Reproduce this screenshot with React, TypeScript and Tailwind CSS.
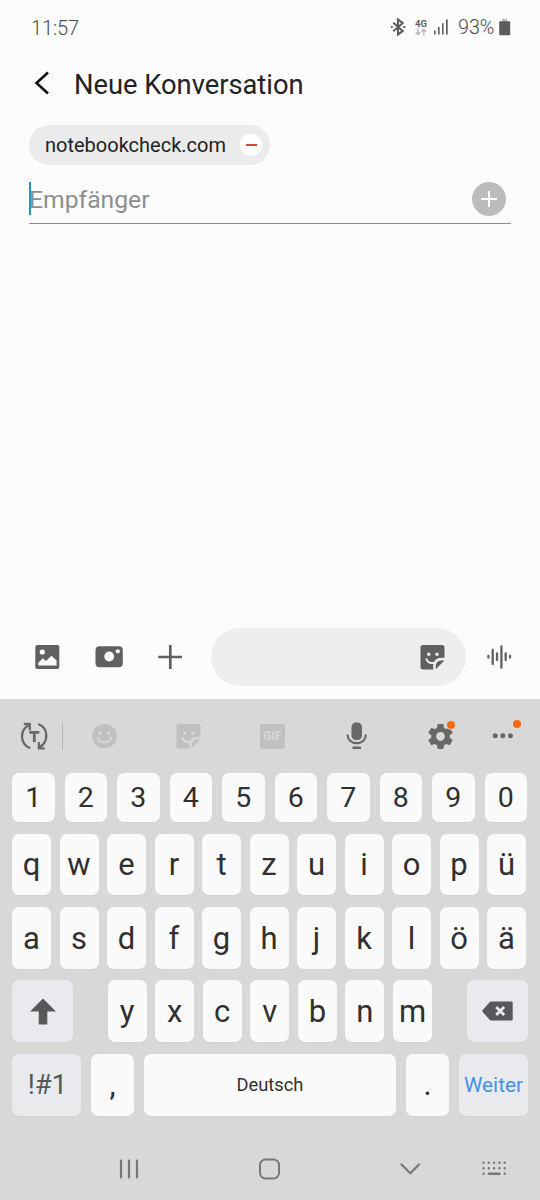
import type { ReactNode } from 'react'
import { clsx } from 'clsx'

const numberRow = ['1', '2', '3', '4', '5', '6', '7', '8', '9', '0']
const topRow = ['q', 'w', 'e', 'r', 't', 'z', 'u', 'i', 'o', 'p', 'ü']
const homeRow = ['a', 's', 'd', 'f', 'g', 'h', 'j', 'k', 'l', 'ö', 'ä']
const bottomRow = ['y', 'x', 'c', 'v', 'b', 'n', 'm']

interface KeyProps {
  children: ReactNode
  label?: string
  special?: boolean
  className?: string
}

function Key({ children, label, special, className }: KeyProps) {
  return (
    <button
      aria-label={label}
      className={clsx(
        'flex h-full items-center justify-center rounded-[7px] shadow-[0_1px_1px_rgba(0,0,0,0.03)]',
        special ? 'bg-[#e9eaee] text-[#58585a]' : 'bg-[#fafafa] text-[#303030]',
        className
      )}
    >
      {children}
    </button>
  )
}

function StickerIcon({ cutout }: { cutout: string }) {
  return (
    <svg width="25" height="25" viewBox="0 0 25 25" fill="currentColor">
      <path d="M3 0h19a2.500 2.500 0 0 1 2.500 2.500V12.700h-3.200c-4.600 0-8 3.500-8 8v3.800H3A2.500 2.500 0 0 1 0.500 22V2.500A2.500 2.500 0 0 1 3 0z" />
      <path d="M15.700 24.300v-3.200c0-3.400 2.400-5.700 5.700-5.700h3z" />
      <circle cx="8.800" cy="9.300" r="1.700" fill={cutout} />
      <circle cx="17" cy="9.300" r="1.700" fill={cutout} />
      <path d="M6.500 14.200c1.100 3.300 4.500 4.700 8 3.400" fill="none" stroke={cutout} strokeWidth="2" strokeLinecap="round" />
      <path d="M14.500 24.500v-3.600c0-4 2.900-6.900 6.800-6.900h3.700" fill="none" stroke={cutout} strokeWidth="1.700" />
    </svg>
  )
}

function StatusBar() {
  return (
    <div className="flex h-[55px] items-center justify-between pr-[29px] pl-[31px] text-[#5c5c5c]">
      <span className="text-[20px] leading-none font-light tracking-[-0.1px] text-[#4c4c4c]">11:57</span>
      <div className="flex items-center">
        <svg width="16" height="18" viewBox="0 0 16 18" fill="none" stroke="currentColor" strokeWidth="2">
          <path d="M2.300 4.700l9.500 8.200-4.800 3.700V1.400l4.800 3.700-9.500 8.200" />
          <path d="M-0.500 9h2.200M12.200 9h2.200" />
        </svg>
        <div className="ml-[7px] flex w-[14px] flex-col items-center">
          <span className="text-[9.500px] leading-[9px] font-bold">4G</span>
          <svg width="12" height="8" viewBox="0 0 12 8" fill="none" stroke="#b4b4b4" strokeWidth="1.300">
            <path d="M3 0.500v6M0.700 4.200L3 6.500l2.300-2.300M8.800 7.500v-6M6.500 3.800l2.300-2.300 2.300 2.300" />
          </svg>
        </div>
        <svg className="ml-[6px]" width="15" height="16" viewBox="0 0 15 16" fill="currentColor">
          <rect x="0" y="11.500" width="1.600" height="4" />
          <rect x="4" y="8" width="1.600" height="7.500" />
          <rect x="8" y="4.200" width="1.600" height="11.300" />
          <rect x="12" y="0.500" width="1.700" height="15" />
        </svg>
        <span className="ml-[9px] w-[37px] text-[19.700px] leading-none font-light whitespace-nowrap text-[#4c4c4c]">93%</span>
        <svg className="ml-[4px]" width="12" height="17" viewBox="0 0 12 17">
          <rect x="3" y="0" width="5" height="3" fill="#b8b8b8" />
          <rect x="0.200" y="2.300" width="11" height="14" rx="1" fill="currentColor" />
        </svg>
      </div>
    </div>
  )
}

function ComposeBar() {
  return (
    <div className="flex h-[71px] items-start text-[#606060]">
      <div className="flex h-[58px] w-full items-center pr-[27px] pl-[35px]">
        <svg width="25" height="24" viewBox="0 0 25 24" fill="currentColor">
          <rect x="0.300" width="24" height="24" rx="2" />
          <circle cx="7.300" cy="7" r="2.600" fill="#fcfcfc" />
          <path d="M3.300 20.500v-2.800l4.500-4.500 3.200 2.800 5.500-5.300 5.100 4.700v5.100z" fill="#fcfcfc" />
        </svg>
        <svg className="ml-[35px]" width="28" height="22" viewBox="0 0 28 22" fill="currentColor">
          <rect x="0.500" y="0.200" width="27.300" height="21" rx="4" />
          <circle cx="14.200" cy="10.500" r="4.900" fill="#fcfcfc" />
          <circle cx="22.800" cy="5.300" r="2.100" fill="#fcfcfc" />
        </svg>
        <svg className="ml-[35px]" width="24" height="24" viewBox="0 0 24 24" stroke="currentColor" strokeWidth="2.700">
          <path d="M12.300 0v24M0.300 12H24" />
        </svg>
        <div className="ml-[29px] flex h-[58px] w-[255px] items-center justify-end rounded-full bg-[#eeeeee] pr-[21px]">
          <StickerIcon cutout="#eeeeee" />
        </div>
        <svg className="ml-[21px]" width="26" height="24" viewBox="0 0 26 24" stroke="currentColor" strokeWidth="2.300" strokeLinecap="round">
          <path d="M1.400 11v1.500M5.700 5v14M10 8.500v6.500M14.400 1.300v21.400M18.700 8.500v6.500M23 11v1.500" />
        </svg>
      </div>
    </div>
  )
}

function KeyboardToolbar() {
  return (
    <div className="flex h-[74px] items-center pl-[20px] text-[#686868]">
      <svg width="28" height="28" viewBox="0 0 28 28" fill="none" stroke="currentColor" strokeWidth="2.300">
        <path d="M10.300 26.200C5 24.500 2 19.500 2 14.500 2 9.500 4.500 5.300 9 3" />
        <path d="M3.800 2h6v6.200" />
        <path d="M18.200 2C23.500 4 26.300 8.500 26.300 13.500c0 5-2.500 9.200-6.500 11.500" />
        <path d="M24.700 26.300h-5.800v-6.200" />
        <path d="M9.300 10.300h10M14.300 10.300v10" strokeWidth="2.800" />
      </svg>
      <div className="ml-[14px] h-[27px] w-px bg-[#b4b4b4]" />
      <svg className="ml-[29px] text-[#c0c0c0]" width="25" height="25" viewBox="0 0 25 25" fill="currentColor">
        <circle cx="12.500" cy="12.200" r="12.200" />
        <circle cx="8.300" cy="9" r="1.700" fill="#d8d8d8" />
        <circle cx="16.700" cy="9" r="1.700" fill="#d8d8d8" />
        <path d="M6 14c2.200 6 10.800 6 13 0" fill="none" stroke="#d8d8d8" strokeWidth="2" strokeLinecap="round" />
      </svg>
      <span className="ml-[59px] text-[#c0c0c0]">
        <StickerIcon cutout="#d8d8d8" />
      </span>
      <div className="ml-[59px] flex h-[25px] w-[25px] items-center justify-center rounded-[3px] bg-[#c0c0c0] text-[12px] font-bold text-[#d8d8d8]">
        GIF
      </div>
      <svg className="ml-[61px]" width="21" height="28" viewBox="0 0 21 28" fill="currentColor">
        <rect x="5.500" y="0.500" width="10.500" height="17.500" rx="4.500" />
        <path d="M1.500 12.500c0 5 3.700 8.700 9.200 8.700s9.200-3.700 9.200-8.700" fill="none" stroke="currentColor" strokeWidth="2.200" />
        <rect x="6.500" y="24.500" width="8.500" height="2.500" rx="0.500" />
      </svg>
      <div className="relative ml-[58px]">
        <svg width="31" height="31" viewBox="0 0 24 24" fill="currentColor">
          <path d="M19.140 12.940c.04-.3.06-.61.06-.94 0-.32-.02-.64-.07-.94l2.030-1.580c.18-.14.23-.41.12-.61l-1.920-3.320c-.12-.22-.37-.29-.59-.22l-2.390.96c-.5-.38-1.030-.7-1.620-.94l-.36-2.540c-.04-.24-.24-.41-.48-.41h-3.840c-.24 0-.43.17-.47.41l-.36 2.540c-.59.24-1.130.57-1.620.94l-2.390-.96c-.22-.08-.47 0-.59.22L2.740 8.870c-.12.21-.08.47.12.61l2.030 1.580c-.05.3-.09.63-.09.94s.02.64.07.94l-2.030 1.580c-.18.14-.23.41-.12.61l1.920 3.320c.12.22.37.29.59.22l2.390-.96c.5.38 1.030.7 1.620.94l.36 2.540c.05.24.24.41.48.41h3.840c.24 0 .44-.17.47-.41l.36-2.540c.59-.24 1.130-.56 1.620-.94l2.390.96c.22.08.47 0 .59-.22l1.920-3.320c.12-.22.07-.47-.12-.61l-2.010-1.580zM12 15.400c-1.880 0-3.400-1.520-3.400-3.400s1.520-3.400 3.400-3.400 3.400 1.520 3.400 3.400-1.520 3.400-3.400 3.400z" />
        </svg>
        <span className="absolute -top-px right-0 size-[10px] rounded-full border border-[#d8d8d8] bg-[#f26a0c]" />
      </div>
      <div className="relative ml-[36px]">
        <svg width="22" height="6" viewBox="0 0 22 6" fill="currentColor">
          <circle cx="3.200" cy="2.800" r="2.500" />
          <circle cx="10.800" cy="2.800" r="2.500" />
          <circle cx="18.400" cy="2.800" r="2.500" />
        </svg>
        <span className="absolute -top-[13px] -right-[7px] size-[8px] rounded-full bg-[#f26a0c]" />
      </div>
    </div>
  )
}

function Keyboard() {
  return (
    <div className="px-3">
      <div className="flex h-[49px] w-[515px] gap-[10px]">
        {numberRow.map((n) => (
          <Key key={n} className="min-w-0 flex-1 pt-[2px] text-[28.500px]">
            {n}
          </Key>
        ))}
      </div>
      {[topRow, homeRow].map((row) => (
        <div key={row[0]} className="mt-[11.700px] flex h-[61.700px] w-[514px] gap-[8.500px]">
          {row.map((letter) => (
            <Key key={letter} className="min-w-0 flex-1 pt-[2px] text-[31px]">
              {letter}
            </Key>
          ))}
        </div>
      ))}
      <div className="mt-[11.700px] flex h-[61.700px] w-[515.500px] justify-between">
        <Key special label="Shift" className="w-[61px]">
          <svg width="26" height="27" viewBox="0 0 26 27" fill="currentColor">
            <path d="M13 0.500L26 13.500h-8.700v13H8.700v-13H0z" />
          </svg>
        </Key>
        <div className="flex w-[324.500px] gap-[8.500px]">
          {bottomRow.map((letter) => (
            <Key key={letter} className="min-w-0 flex-1 pt-[2px] text-[31px]">
              {letter}
            </Key>
          ))}
        </div>
        <Key special label="Löschen" className="w-[61px]">
          <svg width="31" height="20" viewBox="0 0 31 20" fill="currentColor">
            <path d="M9.200 0.500h20.300a1.200 1.200 0 0 1 1.200 1.200v16.600a1.200 1.200 0 0 1-1.200 1.200H9.200q-1 0-1.800-1L0.700 11q-.8-1 0-2L7.400 1.500q.8-1 1.800-1z" />
            <path d="M14.200 6l8 8M22.200 6l-8 8" stroke="#e9eaee" strokeWidth="2.800" />
          </svg>
        </Key>
      </div>
      <div className="mt-[11.700px] flex h-[61.700px] w-[516px] justify-between">
        <Key special className="w-[69px] pl-[2px] text-[27.500px]">!#1</Key>
        <Key className="w-[42.500px] pt-[2px] text-[31px]">,</Key>
        <Key className="w-[252px] pt-px text-[18.300px]">Deutsch</Key>
        <Key className="w-[42.500px] pt-[2px] text-[31px]">.</Key>
        <Key special className="w-[69px] pt-[2px] text-[20.800px] !text-[#4290e8]">Weiter</Key>
      </div>
    </div>
  )
}

function NavBar() {
  return (
    <div className="flex flex-1 items-center pt-[21.500px] pl-[119px] text-[#777777]">
      <svg width="20" height="20" viewBox="0 0 20 20" stroke="currentColor" strokeWidth="2.200" strokeLinecap="round">
        <path d="M2 1.500v17M10 1.500v17M18 1.500v17" />
      </svg>
      <svg className="ml-[119px]" width="23" height="22" viewBox="0 0 23 22" fill="none" stroke="currentColor" strokeWidth="2">
        <rect x="2" y="1.500" width="19" height="19" rx="5.500" />
      </svg>
      <svg className="ml-[119px]" width="20" height="12" viewBox="0 0 20 12" fill="none" stroke="currentColor" strokeWidth="2.200" strokeLinecap="round">
        <path d="M1.500 1.500l8.800 8.800 8.700-8.800" />
      </svg>
      <svg className="ml-[62px]" width="25" height="15" viewBox="0 0 25 15" fill="none" stroke="currentColor" strokeWidth="2.400" strokeLinecap="round">
        <path d="M1.500 1.700h0M6.800 1.700h0M12.100 1.700h0M17.400 1.700h0M22.700 1.700h0M1.500 7.200h0M6.800 7.200h0M12.100 7.200h0M17.400 7.200h0M22.700 7.200h0M1.500 12.700h0M6.800 12.700h10.600M22.700 12.700h0" />
      </svg>
    </div>
  )
}

export default function App() {
  return (
    <div className="flex h-[1200px] w-[540px] flex-col overflow-hidden bg-[#fcfcfc] font-['Roboto',sans-serif]">
      <StatusBar />

      <header className="flex h-[58px] items-center pl-[34px]">
        <svg className="-mt-[2px]" width="15" height="24" viewBox="0 0 15 24" fill="none" stroke="#111111" strokeWidth="2.600">
          <path d="M14 1.500L2.500 12 14 22.500" />
        </svg>
        <h1 className="ml-[25px] pt-[3px] text-[27.300px] text-[#222222]">Neue Konversation</h1>
      </header>

      <main className="flex flex-1 flex-col pt-[12px] pr-[29px] pl-[29px]">
        <div className="flex h-[40px] w-[241px] items-center justify-between rounded-full bg-[#ebebeb] pr-[8px] pl-[16px]">
          <span className="text-[20px] text-[#222222]">notebookcheck.com</span>
          <button aria-label="Entfernen" className="flex size-[22px] items-center justify-center rounded-full bg-white">
            <span className="h-[2px] w-[11px] bg-[#d5482f]" />
          </button>
        </div>
        <div className="flex h-[59px] items-center justify-between border-b border-[#8c8c8c] pt-[9px] pr-[5px]">
          <div className="flex h-[33px] items-center border-l-2 border-[#2595b4]">
            <span className="-ml-[2px] pt-[2px] text-[24.700px] text-[#8e8e8e]">Empfänger</span>
          </div>
          <button aria-label="Hinzufügen" className="flex size-[34px] items-center justify-center rounded-full bg-[#bcbcbc]">
            <svg width="16" height="16" viewBox="0 0 16 16" stroke="#ffffff" strokeWidth="2">
              <path d="M8 0v16M0 8h16" />
            </svg>
          </button>
        </div>
      </main>

      <ComposeBar />

      <section className="flex h-[501px] flex-col bg-[#d8d8d8]">
        <KeyboardToolbar />
        <Keyboard />
        <NavBar />
      </section>
    </div>
  )
}
